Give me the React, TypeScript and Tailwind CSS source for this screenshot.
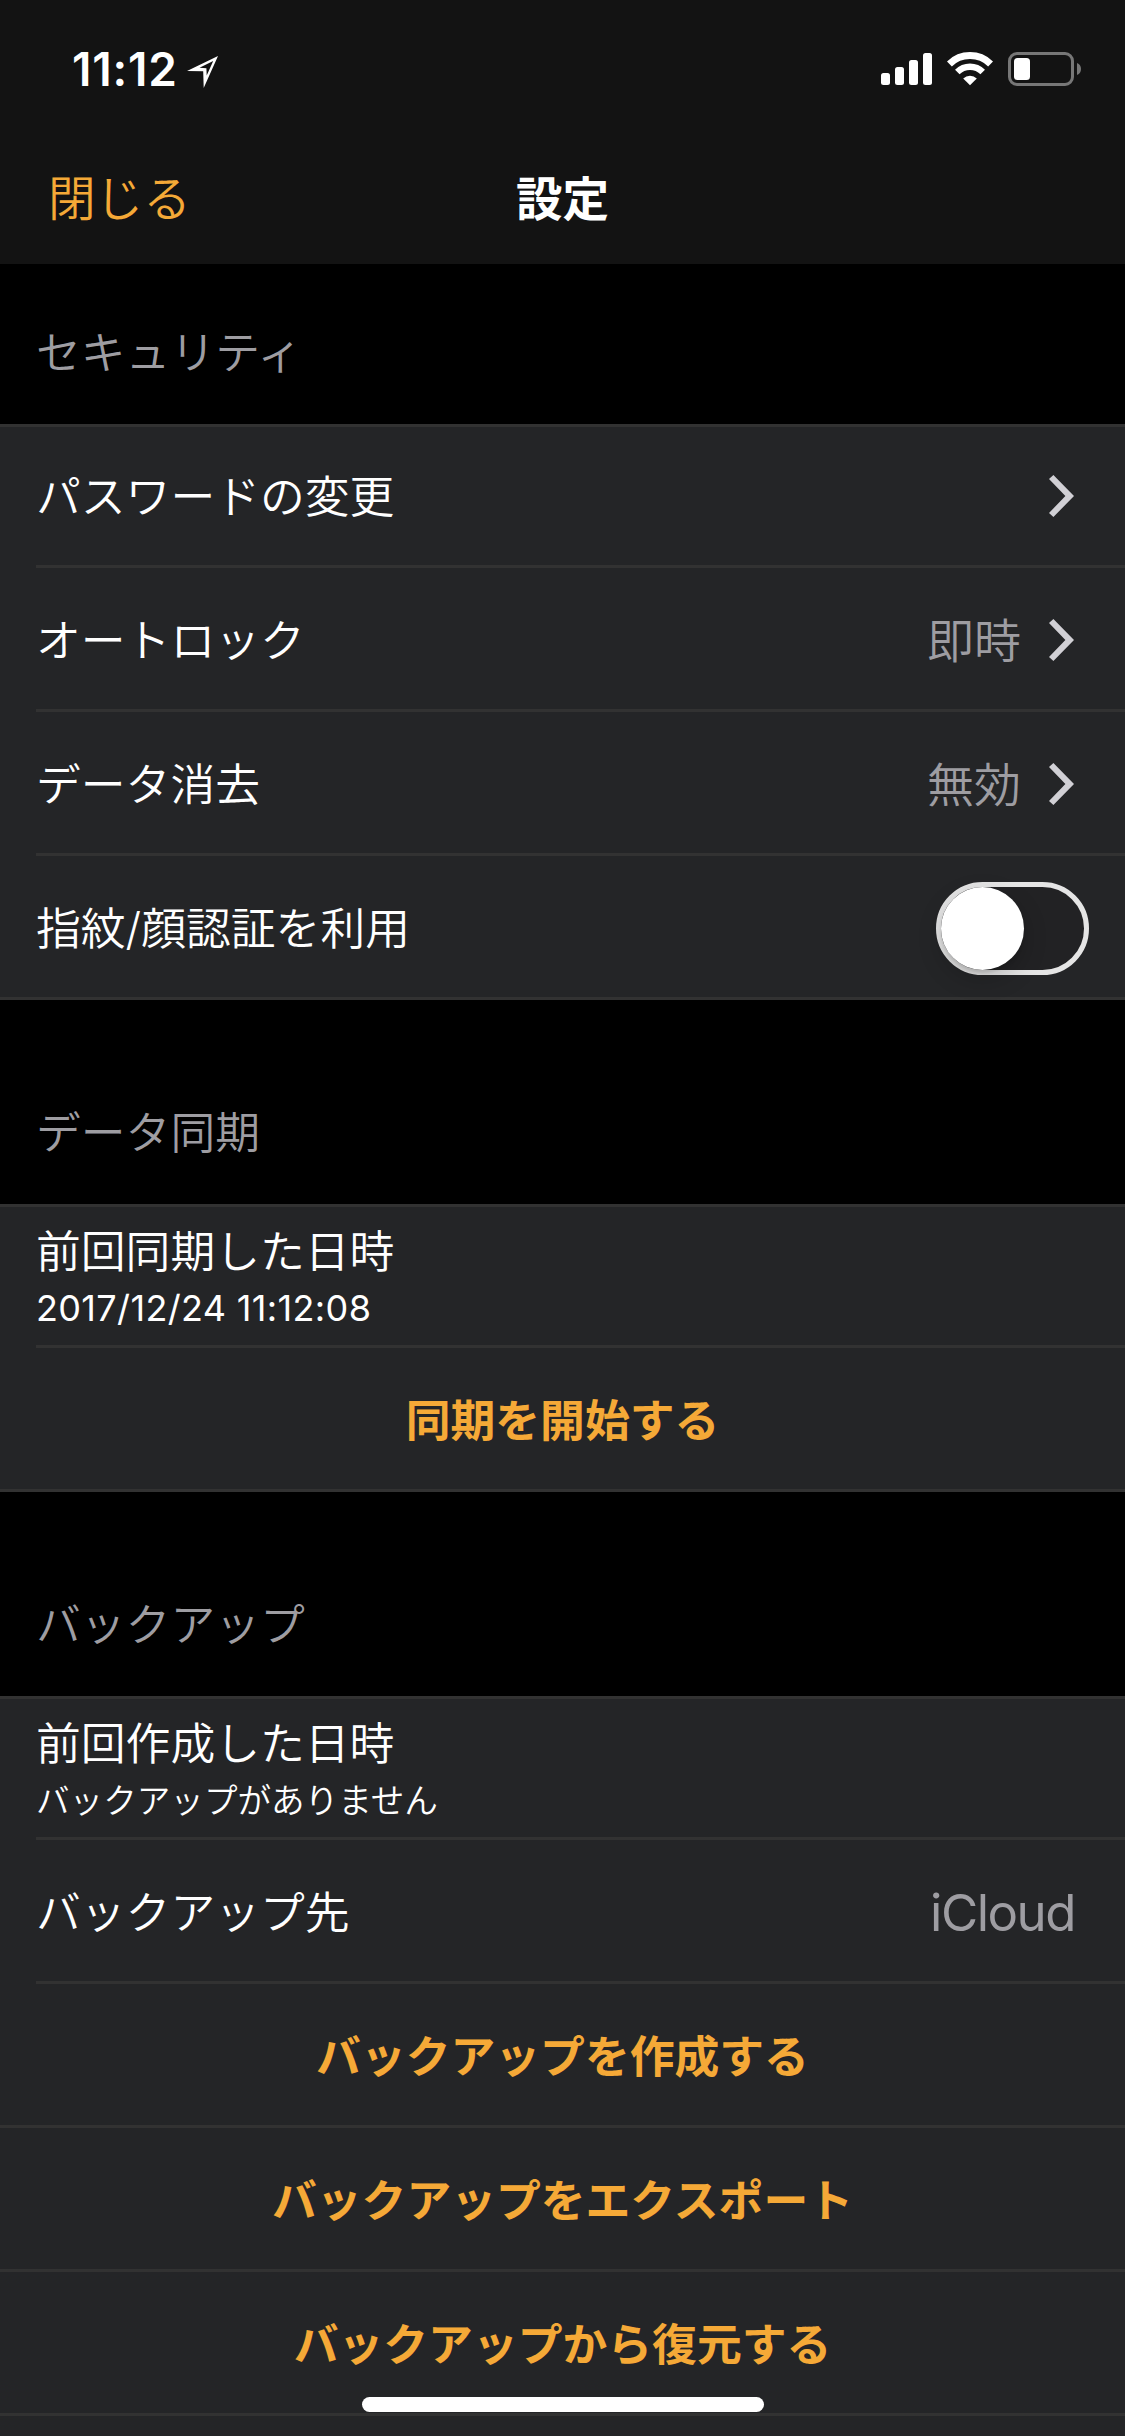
import type { ReactNode } from "react";

function Chevron() {
  return (
    <svg className="ml-[28px] mr-[51px] h-[42px] w-[25px]" viewBox="0 0 25 42" fill="#d1d0d5">
      <path d="M4.4 0 L25 21 L4.4 42 L0 38 L16.4 21 L0 4 Z" />
    </svg>
  );
}

function Toggle() {
  return (
    <div className="relative mr-[36px] h-[93px] w-[153px] rounded-full border-[5px] border-[#e5e5e5] bg-[#222224]">
      <div className="absolute left-0 top-0 h-[83px] w-[83px] rounded-full bg-white shadow-[0_9px_24px_rgba(0,0,0,0.2),0_3px_3px_rgba(0,0,0,0.1)]" />
    </div>
  );
}

function SectionTitle({ children, first }: { children: ReactNode; first?: boolean }) {
  return (
    <h2 className={first ? "h-[160px] pl-[36px] pt-[65px] text-[44.8px] leading-[48px] text-[#9e9da2]" : "h-[204px] pl-[36px] pt-[109px] text-[44.8px] leading-[48px] text-[#9e9da2]"}>
      {children}
    </h2>
  );
}

function Group({ children }: { children: ReactNode }) {
  return <div className="border-t-[3px] border-[#323232] bg-[#242527]">{children}</div>;
}

type RowProps = { label: string; value?: string; detail?: string; chevron?: boolean; toggle?: boolean; edge?: "inset" | "full"; first?: boolean };

function Row({ label, value, detail, chevron, toggle, edge = "inset", first }: RowProps) {
  return (
    <div className={edge === "full" ? "border-b-[3px] border-[#323232] pl-[36px]" : "pl-[36px]"}>
      <div
        className={
          edge === "full"
            ? "flex h-[141px] items-center pt-[3px]"
            : first
              ? "flex h-[141px] items-center border-b-[3px] border-[#323232]"
              : "flex h-[144px] items-center border-b-[3px] border-[#323232] pt-[2px]"
        }
      >
        {detail ? (
          <div className="flex flex-1 flex-col pt-[4px]">
            <span className="text-[44.8px] leading-[60px] text-white">{label}</span>
            {detail.startsWith("2") ? (
              <span className="text-[36px] font-normal leading-[52px] tracking-[0.35px] text-white">{detail}</span>
            ) : (
              <span className="pt-px text-[33.6px] leading-[52px] text-white">{detail}</span>
            )}
          </div>
        ) : (
          <span className="flex-1 pt-[2px] text-[44.8px] leading-[60px] text-white">{label}</span>
        )}
        {value && (
          <span
            className={
              chevron
                ? "pt-[3px] text-[47px] leading-[60px] text-[#9e9da2]"
                : "mr-[50px] pt-[3px] text-[51px] font-normal leading-[60px] tracking-[-1.5px] text-[#9e9da2]"
            }
          >
            {value}
          </span>
        )}
        {chevron && <Chevron />}
        {toggle && <Toggle />}
      </div>
    </div>
  );
}

function ActionRow({ children }: { children: ReactNode }) {
  return (
    <button className="flex h-[144px] w-full items-center justify-center border-b-[3px] border-[#323232] pt-[4px] text-[44.8px] font-bold leading-[60px] text-[#f5a937]">
      {children}
    </button>
  );
}

function StatusBar() {
  return (
    <div className="flex h-[132px] items-start pl-[72px] pr-[44px] pt-[52px] text-white">
      <span className="-mt-[6px] w-[104px] whitespace-nowrap text-[46px] font-semibold leading-[46px] tracking-[0.8px]">11:12</span>
      <svg className="ml-[11px] mt-[4px] h-[32px] w-[31px]" viewBox="0 0 31 32" fill="#fff">
        <path fillRule="evenodd" d="M31 0 L16.7 32 L16.2 15.3 L0 15 Z M26.2 5 L12.5 11.8 L19.4 12.2 L19.7 19.5 Z" />
      </svg>
      <div className="ml-auto flex items-start">
        <svg className="mt-px h-[32px] w-[51px]" viewBox="0 0 51 32" fill="#fff">
          <rect x="0" y="20" width="9" height="12" rx="2.5" />
          <rect x="14" y="14" width="9" height="18" rx="2.5" />
          <rect x="28" y="7" width="9" height="25" rx="2.5" />
          <rect x="42" y="0" width="9" height="32" rx="2.5" />
        </svg>
        <svg className="ml-[15px] h-[34px] w-[46px]" viewBox="0 0 46 34" fill="none" stroke="#fff">
          <path d="M2.4 12 A29.5 29.5 0 0 1 43.6 12" strokeWidth="7" />
          <path d="M10.3 20 A18.2 18.2 0 0 1 35.7 20" strokeWidth="6.5" />
          <path d="M16.2 26.5 A9.7 9.7 0 0 1 29.8 26.5 L23 33.3 Z" fill="#fff" stroke="none" />
        </svg>
        <svg className="ml-[15px] h-[34px] w-[73px]" viewBox="0 0 73 34">
          <rect x="1.5" y="1.5" width="63" height="31" rx="7.5" fill="none" stroke="#777" strokeWidth="3" />
          <rect x="6" y="6" width="16" height="22" rx="3.5" fill="#fff" />
          <path d="M69 11 Q73 12.5 73 17 Q73 21.5 69 23 Z" fill="#777" />
        </svg>
      </div>
    </div>
  );
}

export default function App() {
  return (
    <div className="relative h-[2436px] w-[1125px] overflow-hidden bg-black font-['Inter','Noto_Sans_CJK_JP',sans-serif] font-[350]" lang="ja">
      <header className="h-[264px] bg-[#131313]">
        <StatusBar />
        <div className="grid h-[132px] grid-cols-3 items-start pt-[37px] leading-[60px]">
          <span className="pl-[48px] text-[47.6px] text-[#f5a937]">閉じる</span>
          <h1 className="text-center text-[46.5px] font-bold text-white">設定</h1>
        </div>
      </header>
      <main>
        <SectionTitle first>セキュリティ</SectionTitle>
        <Group>
          <Row label="パスワードの変更" chevron first />
          <Row label="オートロック" value="即時" chevron />
          <Row label="データ消去" value="無効" chevron />
          <Row label="指紋/顔認証を利用" toggle edge="full" />
        </Group>
        <SectionTitle>データ同期</SectionTitle>
        <Group>
          <Row label="前回同期した日時" detail="2017/12/24 11:12:08" first />
          <ActionRow>同期を開始する</ActionRow>
        </Group>
        <SectionTitle>バックアップ</SectionTitle>
        <Group>
          <Row label="前回作成した日時" detail="バックアップがありません" first />
          <Row label="バックアップ先" value="iCloud" />
          <ActionRow>バックアップを作成する</ActionRow>
          <ActionRow>バックアップをエクスポート</ActionRow>
          <ActionRow>バックアップから復元する</ActionRow>
          <div className="h-[20px]" />
        </Group>
      </main>
      <div className="absolute left-[362px] top-[2397px] h-[15px] w-[402px] rounded-full bg-white" />
    </div>
  );
}
